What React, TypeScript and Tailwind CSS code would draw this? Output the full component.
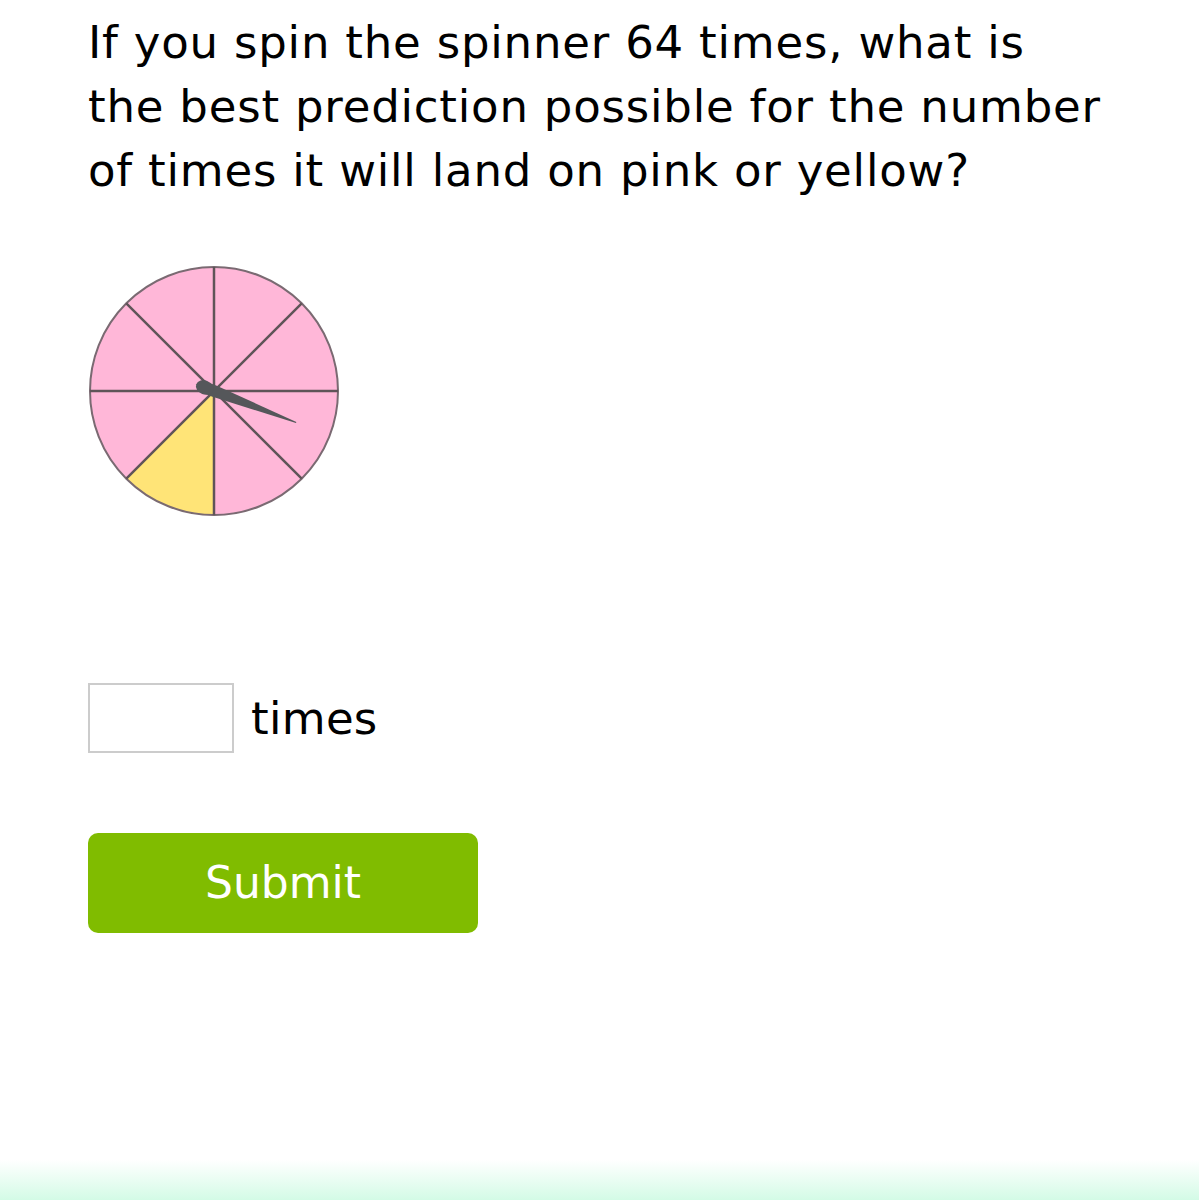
import React from 'react';

function Spinner() {
  const cx = 126;
  const cy = 126;
  const r = 124;
  const d = r * Math.SQRT1_2;
  return (
    <svg width="252" height="252" viewBox="0 0 252 252">
      <circle cx={cx} cy={cy} r={r} fill="#ffb7d8" />
      {/* yellow slice: 6 o'clock to 7:30 */}
      <path
        d={`M ${cx} ${cy} L ${cx} ${cy + r} A ${r} ${r} 0 0 1 ${cx - d} ${cy + d} Z`}
        fill="#ffe477"
      />
      <circle cx={cx} cy={cy} r={r} fill="none" stroke="#7a6a72" strokeWidth="2" />
      <g stroke="#5f5458" strokeWidth="2.5">
        <line x1={cx} y1={cy - r} x2={cx} y2={cy + r} />
        <line x1={cx - r} y1={cy} x2={cx + r} y2={cy} />
        <line x1={cx - d} y1={cy - d} x2={cx + d} y2={cy + d} />
        <line x1={cx - d} y1={cy + d} x2={cx + d} y2={cy - d} />
      </g>
      {/* pointer */}
      <g transform={`translate(${cx} ${cy}) rotate(21)`}>
        <path d="M -14 -6 Q -18 0 -14 6 L 0 6 L 88 0.5 L 88 -0.5 L 0 -6 Z" fill="#55575a" />
        <ellipse cx="-10" cy="0" rx="9" ry="7" fill="#55575a" />
      </g>
    </svg>
  );
}

export default function App() {
  return (
    <div
      className="relative min-h-[1200px] bg-white text-black"
      style={{ fontFamily: '"DejaVu Sans", Verdana, sans-serif' }}
    >
      <div className="pl-[88px] pr-[90px] pt-[11px]">
        <p className="text-[45px] leading-[64px] tracking-[0.8px]">
          If you spin the spinner 64 times, what is the best prediction possible for the number of times it will land on
          pink or yellow?
        </p>

        <div className="mt-[62px]">
          <Spinner />
        </div>

        <div className="mt-[166px] flex items-center gap-[17px]">
          <div className="h-[70px] w-[146px] border-2 border-[#cccccc] bg-white" />
          <span className="text-[45px] leading-none tracking-[0.3px]">times</span>
        </div>

        <button className="mt-[80px] flex h-[100px] w-[390px] items-center justify-center rounded-[10px] bg-[#80bc00] text-[44px] text-white">
          Submit
        </button>
      </div>

      <div className="absolute bottom-0 left-0 right-0 h-[40px] bg-gradient-to-b from-white to-[#d3fbe6]" />
    </div>
  );
}
